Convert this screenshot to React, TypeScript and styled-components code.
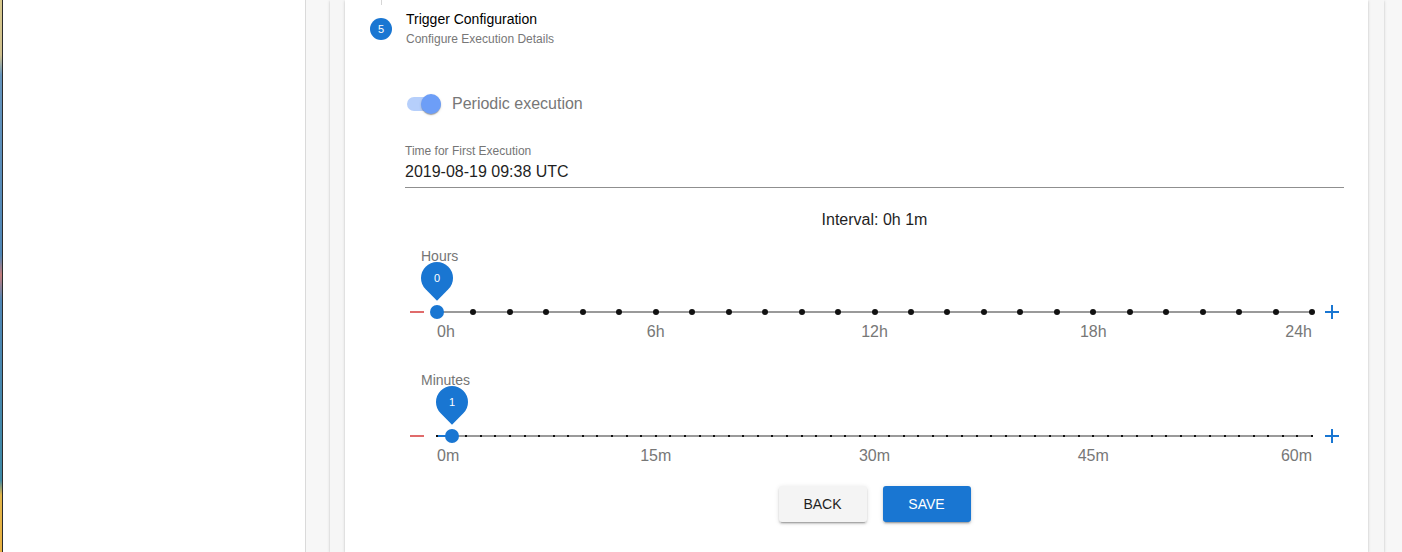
import React from 'react';
import styled, { createGlobalStyle } from 'styled-components';

const GlobalStyle = createGlobalStyle`
  html, body { margin: 0; padding: 0; }
  body {
    font-family: "Liberation Sans", Arial, sans-serif;
    background: #f7f7f7;
    overflow: hidden;
  }
`;

const Shell = styled.div`
  display: flex;
  width: 1402px;
  height: 552px;
  overflow: hidden;
`;

const DesktopEdge = styled.div`
  width: 2px;
  flex: none;
  border-right: 1px solid #2b2b2b;
  background: linear-gradient(
    to bottom,
    #d8c98c 0px,
    #cfc08e 55px,
    #6494bd 75px,
    #4f86b5 255px,
    #c47c7c 275px,
    #4f86b5 300px,
    #3e89a5 480px,
    #e2b548 495px,
    #e8b040 552px
  );
`;

const Sidebar = styled.aside`
  width: 302px;
  flex: none;
  background: #ffffff;
  border-right: 1px solid #dadada;
`;

const Main = styled.main`
  flex: 1;
  min-width: 0;
  display: flex;
  background: #f7f7f7;
  padding: 0 18px 0 24px;
`;

const OuterPaper = styled.section`
  flex: 1;
  display: flex;
  background: #f6f6f6;
  padding: 0 16px 0 15px;
  box-shadow: 0 1px 3px rgba(0, 0, 0, 0.18), 0 1px 1px rgba(0, 0, 0, 0.1);
`;

const StepCard = styled.div`
  flex: 1;
  background: #ffffff;
  padding: 0 24px 0 25px;
  box-shadow: 0 1px 3px rgba(0, 0, 0, 0.18), 0 1px 1px rgba(0, 0, 0, 0.1);
`;

const Connector = styled.div`
  width: 1px;
  height: 5px;
  margin-left: 11px;
  background: #d6d6d6;
`;

const StepHeader = styled.div`
  display: flex;
  align-items: center;
  gap: 14px;
  margin-top: 4px;
`;

const StepIcon = styled.div`
  width: 22px;
  height: 22px;
  border-radius: 50%;
  background: #1976d2;
  color: #fff;
  font-size: 11px;
  display: flex;
  align-items: center;
  justify-content: center;
  flex: none;
`;

const StepText = styled.div`
  display: flex;
  flex-direction: column;
`;

const StepTitle = styled.div`
  font-size: 14px;
  line-height: 20px;
  color: #000;
`;

const StepSubtitle = styled.div`
  font-size: 12px;
  line-height: 20px;
  color: #777;
`;

const StepContent = styled.div`
  margin-left: 35px;
  display: flex;
  flex-direction: column;
`;

const SwitchRow = styled.label`
  margin-top: 36px;
  height: 38px;
  display: flex;
  align-items: center;
`;

const SwitchBox = styled.span`
  position: relative;
  width: 36px;
  height: 20px;
  display: flex;
  align-items: center;
  flex: none;
`;

const SwitchTrack = styled.span`
  margin-left: 2px;
  width: 34px;
  height: 14px;
  border-radius: 7px;
  background: #b6cffb;
`;

const SwitchThumb = styled.span`
  position: absolute;
  right: 0;
  top: 0;
  width: 20px;
  height: 20px;
  border-radius: 50%;
  background: #6d9ef7;
  box-shadow: 0 2px 1px -1px rgba(0, 0, 0, 0.2), 0 1px 1px rgba(0, 0, 0, 0.14),
    0 1px 3px rgba(0, 0, 0, 0.12);
`;

const SwitchLabel = styled.span`
  margin-left: 11px;
  font-size: 16px;
  color: #777;
`;

const FieldLabel = styled.div`
  margin-top: 21px;
  font-size: 12px;
  line-height: 14px;
  color: #757575;
`;

const FieldValue = styled.div`
  margin-top: 4px;
  font-size: 16px;
  line-height: 20px;
  padding-bottom: 5px;
  color: #1f1f1f;
  border-bottom: 1px solid #8f8f8f;
`;

const IntervalText = styled.div`
  margin-top: 22px;
  text-align: center;
  font-size: 16px;
  line-height: 20px;
  color: #1f1f1f;
`;

const SliderTitle = styled.div<{ $gap: number }>`
  margin-top: ${(p) => p.$gap}px;
  margin-left: 16px;
  font-size: 14px;
  line-height: 16px;
  color: #757575;
`;

const SliderRow = styled.div`
  margin-top: 41px;
  height: 14px;
  display: flex;
  align-items: center;
`;

const StepButton = styled.span`
  width: 24px;
  height: 14px;
  flex: none;
  display: flex;
  align-items: center;
  justify-content: center;
`;

const Rail = styled.div`
  position: relative;
  flex: 1;
  margin: 0 8px;
  height: 2px;
  background: #9a9a9a;
`;

const ActiveRail = styled.div`
  position: absolute;
  left: 0;
  top: 0;
  height: 2px;
  background: #1976d2;
`;

const Mark = styled.span<{ $big: boolean }>`
  position: absolute;
  top: ${(p) => (p.$big ? -2 : 0)}px;
  width: ${(p) => (p.$big ? 6 : 2)}px;
  height: ${(p) => (p.$big ? 6 : 2)}px;
  margin-left: ${(p) => (p.$big ? -3 : -1)}px;
  border-radius: ${(p) => (p.$big ? '50%' : '0')};
  background: #111;
`;

const Thumb = styled.span`
  position: absolute;
  top: -6px;
  width: 14px;
  height: 14px;
  margin-left: -7px;
  border-radius: 50%;
  background: #1976d2;
`;

const Pin = styled.span`
  position: absolute;
  top: -49px;
  width: 32px;
  height: 32px;
  margin-left: -16px;
  border-radius: 50% 50% 50% 0;
  background: #1976d2;
  transform: rotate(-45deg);
  display: flex;
  align-items: center;
  justify-content: center;
`;

const PinText = styled.span`
  transform: rotate(45deg);
  color: #fff;
  font-size: 11px;
`;

const TickRow = styled.div`
  margin-top: 3px;
  height: 19px;
  display: flex;
`;

const TickSpacer = styled.span`
  width: 32px;
  flex: none;
`;

const TickArea = styled.div`
  position: relative;
  flex: 1;
`;

const TickLabel = styled.span<{ $align: 'start' | 'center' | 'end' }>`
  position: absolute;
  top: 0;
  font-size: 16px;
  line-height: 19px;
  color: #777;
  white-space: nowrap;
  transform: ${(p) =>
    p.$align === 'center' ? 'translateX(-50%)' : p.$align === 'end' ? 'translateX(-100%)' : 'none'};
`;

const ButtonRow = styled.div`
  margin-top: 21px;
  display: flex;
  justify-content: center;
  gap: 16px;
`;

const ActionButton = styled.button<{ $primary?: boolean }>`
  width: 88px;
  height: 36px;
  border: none;
  border-radius: 3px;
  font-family: "Liberation Sans", Arial, sans-serif;
  font-size: 14px;
  text-transform: uppercase;
  cursor: pointer;
  background: ${(p) => (p.$primary ? '#1976d2' : '#f4f4f4')};
  color: ${(p) => (p.$primary ? '#ffffff' : '#1f1f1f')};
  box-shadow: 0 3px 1px -2px rgba(0, 0, 0, 0.2), 0 2px 2px 0 rgba(0, 0, 0, 0.14),
    0 1px 5px 0 rgba(0, 0, 0, 0.12);
`;

const MinusIcon = () => (
  <svg width="14" height="14" viewBox="0 0 14 14">
    <rect x="0" y="6" width="14" height="2" fill="#e06b6b" />
  </svg>
);

const PlusIcon = () => (
  <svg width="14" height="14" viewBox="0 0 14 14">
    <rect x="0" y="6" width="14" height="2" fill="#1976d2" />
    <rect x="6" y="0" width="2" height="14" fill="#1976d2" />
  </svg>
);

type SliderProps = {
  title: string;
  titleGap: number;
  max: number;
  value: number;
  unit: string;
  bigMarks: boolean;
};

const IntervalSlider = ({ title, titleGap, max, value, unit, bigMarks }: SliderProps) => {
  const marks = Array.from({ length: max + 1 }, (_, i) => i);
  const labels = [0, 1, 2, 3, 4].map((q) => (max / 4) * q);
  const pct = (v: number) => `${(v / max) * 100}%`;
  return (
    <>
      <SliderTitle $gap={titleGap}>{title}</SliderTitle>
      <SliderRow>
        <StepButton>
          <MinusIcon />
        </StepButton>
        <Rail>
          <ActiveRail style={{ width: pct(value) }} />
          {marks.map((m) => (
            <Mark key={m} $big={bigMarks} style={{ left: pct(m) }} />
          ))}
          <Thumb style={{ left: pct(value) }} />
          <Pin style={{ left: pct(value) }}>
            <PinText>{value}</PinText>
          </Pin>
        </Rail>
        <StepButton>
          <PlusIcon />
        </StepButton>
      </SliderRow>
      <TickRow>
        <TickSpacer />
        <TickArea>
          {labels.map((l, i) => (
            <TickLabel
              key={l}
              $align={i === 0 ? 'start' : i === labels.length - 1 ? 'end' : 'center'}
              style={{ left: pct(l) }}
            >
              {l}
              {unit}
            </TickLabel>
          ))}
        </TickArea>
        <TickSpacer />
      </TickRow>
    </>
  );
};

export default function App() {
  return (
    <>
      <GlobalStyle />
      <Shell>
        <DesktopEdge />
        <Sidebar />
        <Main>
          <OuterPaper>
            <StepCard>
              <Connector />
              <StepHeader>
                <StepIcon>5</StepIcon>
                <StepText>
                  <StepTitle>Trigger Configuration</StepTitle>
                  <StepSubtitle>Configure Execution Details</StepSubtitle>
                </StepText>
              </StepHeader>
              <StepContent>
                <SwitchRow>
                  <SwitchBox>
                    <SwitchTrack />
                    <SwitchThumb />
                  </SwitchBox>
                  <SwitchLabel>Periodic execution</SwitchLabel>
                </SwitchRow>
                <FieldLabel>Time for First Execution</FieldLabel>
                <FieldValue>2019-08-19 09:38 UTC</FieldValue>
                <IntervalText>Interval: 0h 1m</IntervalText>
                <IntervalSlider title="Hours" titleGap={18} max={24} value={0} unit="h" bigMarks />
                <IntervalSlider
                  title="Minutes"
                  titleGap={31}
                  max={60}
                  value={1}
                  unit="m"
                  bigMarks={false}
                />
                <ButtonRow>
                  <ActionButton>Back</ActionButton>
                  <ActionButton $primary>Save</ActionButton>
                </ButtonRow>
              </StepContent>
            </StepCard>
          </OuterPaper>
        </Main>
      </Shell>
    </>
  );
}
